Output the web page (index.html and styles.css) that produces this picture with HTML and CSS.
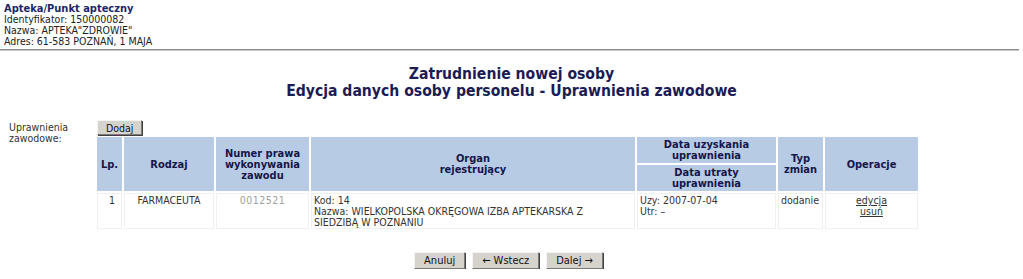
FILE: index.html
```html
<!DOCTYPE html>
<html lang="pl">
<head>
<meta charset="utf-8">
<title>Zatrudnienie nowej osoby</title>
<link rel="stylesheet" href="styles.css">
</head>
<body>
<div class="info">
  <div class="info-title">Apteka/Punkt apteczny</div>
  <div>Identyfikator: 150000082</div>
  <div>Nazwa: APTEKA"ZDROWIE"</div>
  <div>Adres: 61-583 POZNAŃ, 1 MAJA</div>
</div>
<div class="sep"></div>
<h1 class="title">Zatrudnienie nowej osoby<br>Edycja danych osoby personelu - Uprawnienia zawodowe</h1>
<div class="form-row">
  <div class="label">Uprawnienia<br>zawodowe:</div>
  <div class="content">
    <button class="btn btn-small" type="button">Dodaj</button>
    <table class="grid">
      <colgroup>
        <col class="c-lp"><col class="c-rodzaj"><col class="c-numer"><col class="c-organ"><col class="c-data"><col class="c-typ"><col class="c-oper">
      </colgroup>
      <thead>
        <tr>
          <th rowspan="2">Lp.</th>
          <th rowspan="2">Rodzaj</th>
          <th rowspan="2">Numer prawa<br>wykonywania<br>zawodu</th>
          <th rowspan="2">Organ<br>rejestrujący</th>
          <th class="th-sub">Data uzyskania<br>uprawnienia</th>
          <th rowspan="2">Typ<br>zmian</th>
          <th rowspan="2">Operacje</th>
        </tr>
        <tr>
          <th class="th-sub">Data utraty<br>uprawnienia</th>
        </tr>
      </thead>
      <tbody>
        <tr>
          <td class="num">1</td>
          <td class="center">FARMACEUTA</td>
          <td class="center masked">0012521</td>
          <td>Kod: 14<br>Nazwa: WIELKOPOLSKA OKRĘGOWA IZBA APTEKARSKA Z<br>SIEDZIBĄ W POZNANIU</td>
          <td>Uzy: 2007-07-04<br>Utr: –</td>
          <td>dodanie</td>
          <td class="center"><a href="#">edycja</a><br><a href="#">usuń</a></td>
        </tr>
      </tbody>
    </table>
  </div>
</div>
<div class="actions">
  <button class="btn" type="button">Anuluj</button>
  <button class="btn" type="button">← Wstecz</button>
  <button class="btn" type="button">Dalej →</button>
</div>
</body>
</html>
```

FILE: styles.css
```css
html, body {
  margin: 0;
  padding: 0;
  background: #ffffff;
}
body {
  font-family: "DejaVu Sans Condensed", "Liberation Sans", Arial, sans-serif;
  font-size: 10.5px;
  color: #222;
}
.info {
  padding: 3px 4px 0 4px;
  line-height: 11px;
}
.info-title {
  font-weight: bold;
  font-size: 11px;
  color: #1b2766;
}
.sep {
  margin: 2px 4px 0 0;
  height: 0;
  border-top: 1px solid #8a8a8a;
  border-bottom: 1px solid #c8c8c8;
}
.title {
  margin: 15px 0 0 0;
  text-align: center;
  font-size: 15.6px;
  line-height: 17px;
  font-weight: bold;
  color: #1b1b55;
}
.form-row {
  display: flex;
  margin-top: 20px;
  padding-left: 9px;
}
.label {
  width: 86px;
  flex: none;
  line-height: 11px;
  padding-top: 2px;
  color: #333;
}
.content {
  display: flex;
  flex-direction: column;
  align-items: flex-start;
}
.btn {
  font-family: "DejaVu Sans Condensed", "Liberation Sans", Arial, sans-serif;
  font-size: 11px;
  color: #111;
  background: #d6d3cc;
  border: 1px solid;
  border-color: #f4f4f4 #7a7a7a #7a7a7a #f4f4f4;
  box-shadow: 1px 1px 0 #404040;
  padding: 0 9px;
  height: 17px;
  line-height: 14px;
  cursor: pointer;
}
.btn-small {
  margin-left: 2px;
  height: 15px;
  line-height: 12px;
  padding: 0 8px;
  font-size: 10.5px;
}
.grid {
  table-layout: fixed;
  width: 825px;
  border-collapse: separate;
  border-spacing: 2px;
  margin-top: 0;
}
.c-lp { width: 25px; }
.c-rodzaj { width: 90px; }
.c-numer { width: 93px; }
.c-organ { width: 324px; }
.c-data { width: 139px; }
.c-typ { width: 45px; }
.c-oper { width: 93px; }
.grid th {
  background: #b8cbe5;
  color: #16164a;
  font-weight: bold;
  font-size: 11px;
  line-height: 11px;
  padding: 2px 2px;
  text-align: center;
  vertical-align: middle;
}
.grid th.th-sub {
  height: 21px;
}
.grid td {
  background: #ffffff;
  border: 1px solid #f0f0f0;
  vertical-align: top;
  padding: 1px 2px 0 2px;
  line-height: 11px;
  color: #333;
}
.grid td.num {
  text-align: right;
  padding-right: 6px;
}
.grid td.center {
  text-align: center;
}
.grid td.masked {
  color: #a0a0a0;
  letter-spacing: 0.5px;
}
.grid a {
  color: #333;
  text-decoration: underline;
}
.actions {
  display: flex;
  justify-content: center;
  gap: 7px;
  margin-top: 21px;
  padding-right: 6px;
}
```
